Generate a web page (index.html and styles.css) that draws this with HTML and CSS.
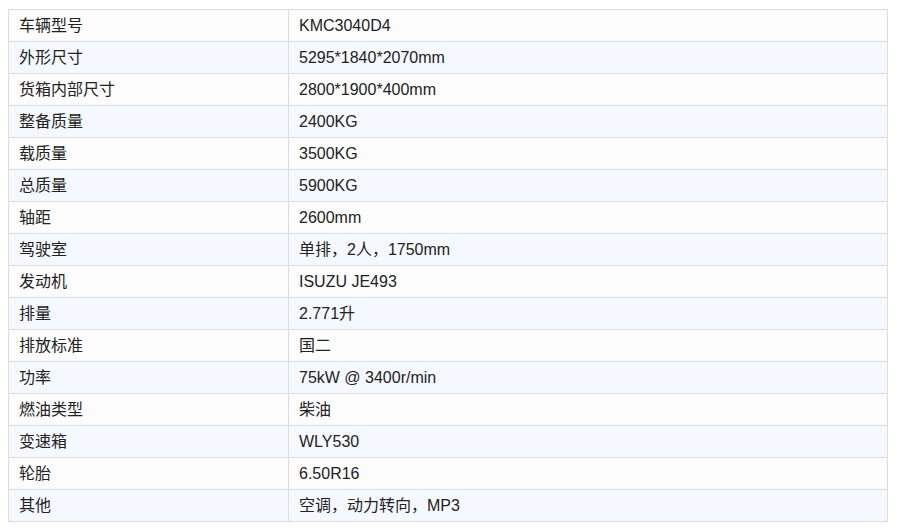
FILE: index.html
```html
<!DOCTYPE html>
<html lang="zh">
<head>
<meta charset="utf-8">
<link rel="stylesheet" href="styles.css">
</head>
<body>
<table class="spec">
<tbody>
<tr><td class="k">车辆型号</td><td>KMC3040D4</td></tr>
<tr><td class="k">外形尺寸</td><td>5295*1840*2070mm</td></tr>
<tr><td class="k">货箱内部尺寸</td><td>2800*1900*400mm</td></tr>
<tr><td class="k">整备质量</td><td>2400KG</td></tr>
<tr><td class="k">载质量</td><td>3500KG</td></tr>
<tr><td class="k">总质量</td><td>5900KG</td></tr>
<tr><td class="k">轴距</td><td>2600mm</td></tr>
<tr><td class="k">驾驶室</td><td>单排，2人，1750mm</td></tr>
<tr><td class="k">发动机</td><td>ISUZU JE493</td></tr>
<tr><td class="k">排量</td><td>2.771升</td></tr>
<tr><td class="k">排放标准</td><td>国二</td></tr>
<tr><td class="k">功率</td><td>75kW @ 3400r/min</td></tr>
<tr><td class="k">燃油类型</td><td>柴油</td></tr>
<tr><td class="k">变速箱</td><td>WLY530</td></tr>
<tr><td class="k">轮胎</td><td>6.50R16</td></tr>
<tr><td class="k">其他</td><td>空调，动力转向，MP3</td></tr>
</tbody>
</table>
</body>
</html>
```
FILE: styles.css
```css
html, body { background: #fff; }
body {
  margin: 9px 8px;
  font-family: "Liberation Sans", Arial, "Noto Sans CJK SC", sans-serif;
  font-size: 16px;
  color: #222;
}
.spec {
  border-collapse: collapse;
  width: 880px;
  table-layout: fixed;
}
.spec td {
  border: 1px solid #ddd;
  height: 32px;
  padding: 0 10px;
  box-sizing: border-box;
  vertical-align: middle;
  line-height: 20px;
}
.spec td.k { width: 280px; }
.spec tr:nth-child(odd) td { background: #fcfcfc; }
.spec tr:nth-child(even) td { background: #f5f9ff; }
```
